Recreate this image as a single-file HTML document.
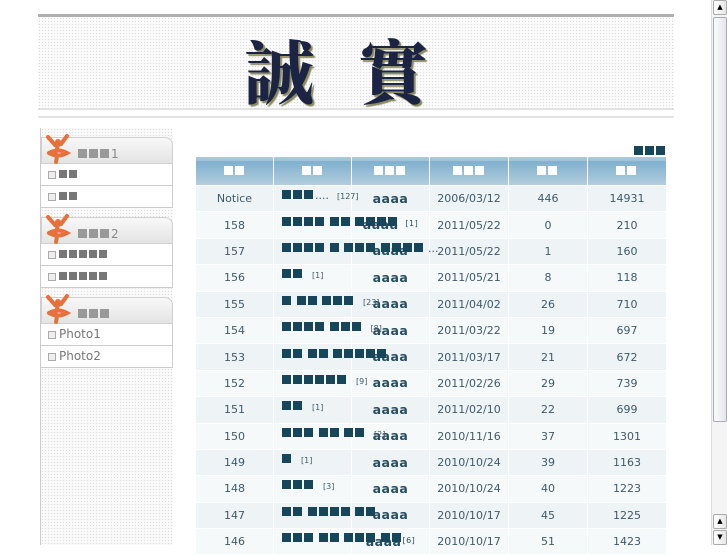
<!DOCTYPE html>
<html><head><meta charset="utf-8"><style>
*{margin:0;padding:0;box-sizing:border-box}
body{width:727px;height:545px;overflow:hidden;background:#fff;font-family:"DejaVu Sans","Liberation Sans",sans-serif;position:relative}
.hdr{position:absolute;left:38px;top:14px;width:636px;height:104px;background-color:#fbfbfb;background-image:radial-gradient(#dcdcdc 0.7px,transparent 0.8px);background-size:3px 3px;border-top:3px solid #b0b0b0}
.hdr:after{content:"";position:absolute;left:0;right:0;bottom:0;height:6px;border-top:2px solid #e2e2e2;border-bottom:2px solid #e2e2e2;background:#fff}
.title{position:absolute;left:206px;top:12px;font-family:"Noto Serif CJK SC","Noto Sans CJK TC",serif;font-weight:900;font-size:70px;color:#1c2444;letter-spacing:44px;text-shadow:2px 2px 1px #8a8a60;line-height:80px}
.side{position:absolute;left:40px;top:128px;width:133px;height:417px;background-color:#fafafa;background-image:radial-gradient(#dcdcdc 0.7px,transparent 0.8px);background-size:3px 3px;border-left:1px solid #ccc}
.box{position:absolute;left:0;width:132px}
.bh{height:27px;background:linear-gradient(#f8f8f8,#e4e4e4);border:1px solid #d0d0d0;border-top-right-radius:8px;position:relative}
.bh svg{position:absolute;left:2px;top:-4px}
.bh .t{position:absolute;left:36px;top:10px;font-size:12px;color:#888;line-height:12px}
.it{height:22px;background:#fff;border-bottom:1px solid #ccc;border-right:1px solid #ccc;position:relative;font-size:12px;color:#777;line-height:21px;padding-left:18px}
.it:before{content:"";position:absolute;left:7px;top:7px;width:6px;height:6px;border:1px solid #aaa;background:#eee}
.g{display:inline-block;width:8px;height:8px;background:#777;margin-right:2px;vertical-align:0}
.gs{display:inline-block;width:9px;height:9px;background:#999;margin-right:2px}
table{position:absolute;left:195px;top:156px;width:471px;border-collapse:collapse;table-layout:fixed}
td,th{border:1px solid #fff;text-align:center;font-size:11px;color:#3e5a6a;white-space:nowrap;overflow:visible;padding:0;vertical-align:middle}
th{height:29px;background:linear-gradient(#a6c6d8 0,#a6c6d8 3px,#7fb0cf 4px,#b4cedd);font-weight:normal}
th i{background:#fff}
td{height:26.4px}
tr:nth-child(even) td{background:#eef3f6}
tr:nth-child(odd) td{background:#f6f9fa}
i{display:inline-block;width:9px;height:9px;background:#174559;margin-right:2px}
td.tt{text-align:left;padding-left:8px}
td.tt span.w{position:relative;top:-3px}
.c{font-size:8px;margin-left:8px;position:relative;top:-3px}
.a{font-weight:bold;font-size:12.5px;color:#274e60;letter-spacing:0.5px;padding-bottom:1px}
.more{position:absolute;left:634px;top:140px}
.sb{position:absolute;left:711px;top:0;width:16px;height:545px;background:#f4f4f4;border-left:1px solid #ddd}
.btn{position:absolute;left:1px;width:14px;height:15px;background:linear-gradient(90deg,#fff,#e6e6e6);border:1px solid #aaa;border-radius:2px;font-size:7px;text-align:center;line-height:13px;color:#000}
.thumb{position:absolute;left:1px;top:17px;width:14px;height:405px;background:linear-gradient(90deg,#fbfbfb,#e2e6ea);border:1px solid #aab;border-radius:2px}
</style></head><body>
<div class="hdr"><div class="title">誠實</div></div>

<div class="side">
 <div class="box" style="top:9px">
  <div class="bh"><svg width="28" height="30" viewBox="0 0 28 30"><path d="M4 3 L11 11 L17 10 L23 2 M14 11 L12 18 M5 19 Q14 14 23 19 Q14 24 5 19 M13 22 L12 28" stroke="#e8703a" stroke-width="4" fill="none" stroke-linecap="round"/><circle cx="14" cy="8" r="3" fill="#e8703a"/></svg><span class="t"><span class="gs"></span><span class="gs"></span><span class="gs"></span>1</span></div>
  <div class="it"><span class="g"></span><span class="g"></span></div>
  <div class="it"><span class="g"></span><span class="g"></span></div>
 </div>
 <div class="box" style="top:89px">
  <div class="bh"><svg width="28" height="30" viewBox="0 0 28 30"><path d="M4 3 L11 11 L17 10 L23 2 M14 11 L12 18 M5 19 Q14 14 23 19 Q14 24 5 19 M13 22 L12 28" stroke="#e8703a" stroke-width="4" fill="none" stroke-linecap="round"/><circle cx="14" cy="8" r="3" fill="#e8703a"/></svg><span class="t"><span class="gs"></span><span class="gs"></span><span class="gs"></span>2</span></div>
  <div class="it"><span class="g"></span><span class="g"></span><span class="g"></span><span class="g"></span><span class="g"></span></div>
  <div class="it"><span class="g"></span><span class="g"></span><span class="g"></span><span class="g"></span><span class="g"></span></div>
 </div>
 <div class="box" style="top:169px">
  <div class="bh"><svg width="28" height="30" viewBox="0 0 28 30"><path d="M4 3 L11 11 L17 10 L23 2 M14 11 L12 18 M5 19 Q14 14 23 19 Q14 24 5 19 M13 22 L12 28" stroke="#e8703a" stroke-width="4" fill="none" stroke-linecap="round"/><circle cx="14" cy="8" r="3" fill="#e8703a"/></svg><span class="t"><span class="gs"></span><span class="gs"></span><span class="gs"></span></span></div>
  <div class="it">Photo1</div>
  <div class="it">Photo2</div>
 </div>
</div>

<div class="more"><i></i><i></i><i></i></div>

<table>
<colgroup><col style="width:78px"><col style="width:78px"><col style="width:78px"><col style="width:79px"><col style="width:79px"><col style="width:79px"></colgroup>
<tr><th><i></i><i></i></th><th><i></i><i></i></th><th><i></i><i></i><i></i></th><th><i></i><i></i><i></i></th><th><i></i><i></i></th><th><i></i><i></i></th></tr>
<tr><td>Notice</td><td class="tt"><span class="w"><i></i><i></i><i></i>....</span><span class="c">[127]</span></td><td class="a">aaaa</td><td>2006/03/12</td><td>446</td><td>14931</td></tr>
<tr><td>158</td><td class="tt"><span class="w"><i></i><i></i><i></i><i></i> <i></i><i></i> <i></i><i></i><i></i><i></i></span></td><td class="a">aaaa <span class="c" style="margin-left:2px;font-weight:normal">[1]</span></td><td>2011/05/22</td><td>0</td><td>210</td></tr>
<tr><td>157</td><td class="tt"><span class="w"><i></i><i></i><i></i><i></i> <i></i> <i></i><i></i><i></i> <i></i><i></i><i></i><i></i> ...</span></td><td class="a">aaaa</td><td>2011/05/22</td><td>1</td><td>160</td></tr>
<tr><td>156</td><td class="tt"><span class="w"><i></i><i></i></span><span class="c">[1]</span></td><td class="a">aaaa</td><td>2011/05/21</td><td>8</td><td>118</td></tr>
<tr><td>155</td><td class="tt"><span class="w"><i></i> <i></i><i></i> <i></i><i></i><i></i></span><span class="c">[23]</span></td><td class="a">aaaa</td><td>2011/04/02</td><td>26</td><td>710</td></tr>
<tr><td>154</td><td class="tt"><span class="w"><i></i><i></i><i></i><i></i> <i></i><i></i><i></i></span><span class="c">[8]</span></td><td class="a">aaaa</td><td>2011/03/22</td><td>19</td><td>697</td></tr>
<tr><td>153</td><td class="tt"><span class="w"><i></i><i></i> <i></i><i></i> <i></i><i></i><i></i><i></i><i></i></span></td><td class="a">aaaa</td><td>2011/03/17</td><td>21</td><td>672</td></tr>
<tr><td>152</td><td class="tt"><span class="w"><i></i><i></i><i></i><i></i><i></i><i></i></span><span class="c">[9]</span></td><td class="a">aaaa</td><td>2011/02/26</td><td>29</td><td>739</td></tr>
<tr><td>151</td><td class="tt"><span class="w"><i></i><i></i></span><span class="c">[1]</span></td><td class="a">aaaa</td><td>2011/02/10</td><td>22</td><td>699</td></tr>
<tr><td>150</td><td class="tt"><span class="w"><i></i><i></i><i></i> <i></i><i></i> <i></i><i></i></span><span class="c">[2]</span></td><td class="a">aaaa</td><td>2010/11/16</td><td>37</td><td>1301</td></tr>
<tr><td>149</td><td class="tt"><span class="w"><i></i></span><span class="c">[1]</span></td><td class="a">aaaa</td><td>2010/10/24</td><td>39</td><td>1163</td></tr>
<tr><td>148</td><td class="tt"><span class="w"><i></i><i></i><i></i></span><span class="c">[3]</span></td><td class="a">aaaa</td><td>2010/10/24</td><td>40</td><td>1223</td></tr>
<tr><td>147</td><td class="tt"><span class="w"><i></i><i></i> <i></i><i></i><i></i><i></i> <i></i><i></i></span></td><td class="a">aaaa</td><td>2010/10/17</td><td>45</td><td>1225</td></tr>
<tr><td>146</td><td class="tt"><span class="w"><i></i><i></i><i></i> <i></i><i></i> <i></i><i></i><i></i> <i></i><i></i></span></td><td class="a">aaaa<span class="c" style="margin-left:1px;font-weight:normal">[6]</span></td><td>2010/10/17</td><td>51</td><td>1423</td></tr>
</table>

<div class="sb">
 <div class="btn" style="top:0">▲</div>
 <div class="thumb"></div>
 <div class="btn" style="top:514px">▲</div>
 <div class="btn" style="top:530px">▼</div>
</div>
</body></html>
